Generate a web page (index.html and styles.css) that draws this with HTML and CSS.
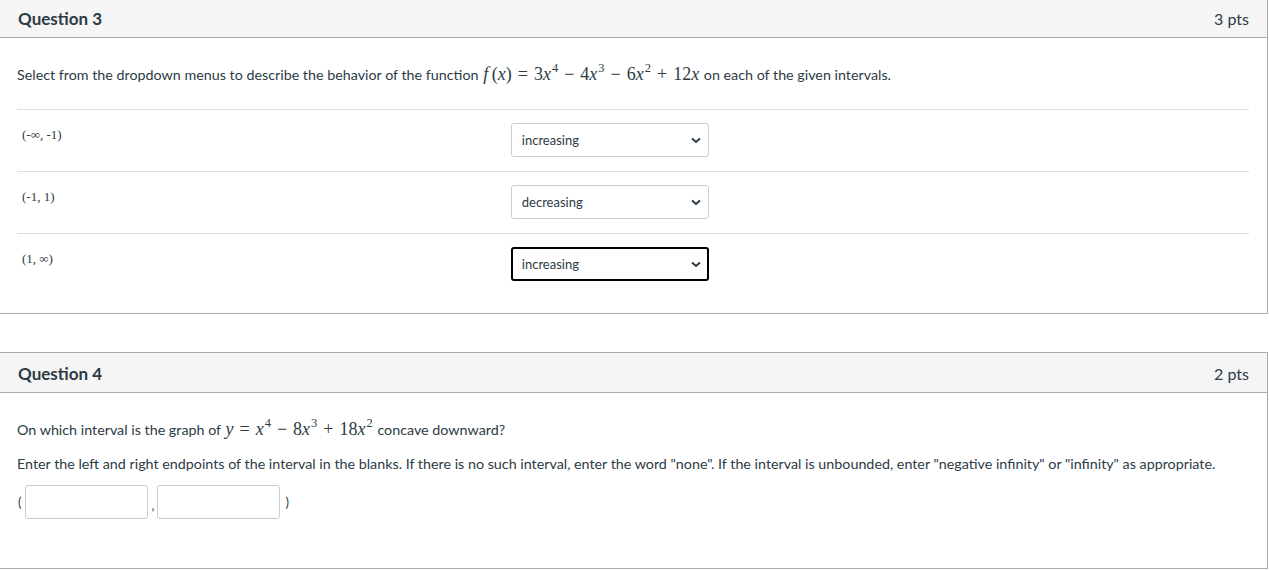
FILE: index.html
```html
<html>
  <head>
    <title>
      Quiz
    </title>
    <link rel="stylesheet" href="styles.css">
  </head>

  <body>
    <div class="quiz">

      <div class="question first">
        <div class="header">
          <span class="title">Question 3</span>
          <span class="points">3 pts</span>
        </div>
        <div class="content">
          <p class="text">Select from the dropdown menus to describe the behavior of the function
            <span class="math"><i>f</i>&#8201;(<i>x</i>)<span class="rel">=</span>3<i>x</i><sup>4</sup><span class="op">&minus;</span>4<i>x</i><sup>3</sup><span class="op">&minus;</span>6<i>x</i><sup>2</sup><span class="op">+</span>12<i>x</i></span>
            on each of the given intervals.</p>

          <table class="answers">
            <tr>
              <td class="interval">(-&infin;, -1)</td>
              <td>
                <span class="dropdown">
                  <select><option>increasing</option><option>decreasing</option></select>
                  <svg class="chevron" width="10" height="7" viewBox="0 0 10 7"><path d="M1 1.5 L5 5 L9 1.5" fill="none" stroke="#2d3b45" stroke-width="2"/></svg>
                </span>
              </td>
            </tr>
            <tr>
              <td class="interval">(-1, 1)</td>
              <td>
                <span class="dropdown">
                  <select><option>decreasing</option><option>increasing</option></select>
                  <svg class="chevron" width="10" height="7" viewBox="0 0 10 7"><path d="M1 1.5 L5 5 L9 1.5" fill="none" stroke="#2d3b45" stroke-width="2"/></svg>
                </span>
              </td>
            </tr>
            <tr>
              <td class="interval">(1, &infin;)</td>
              <td>
                <span class="dropdown">
                  <select class="focused"><option>increasing</option><option>decreasing</option></select>
                  <svg class="chevron" width="10" height="7" viewBox="0 0 10 7"><path d="M1 1.5 L5 5 L9 1.5" fill="none" stroke="#2d3b45" stroke-width="2"/></svg>
                </span>
              </td>
            </tr>
          </table>
        </div>
      </div>

      <div class="question">
        <div class="header">
          <span class="title">Question 4</span>
          <span class="points">2 pts</span>
        </div>
        <div class="content">
          <p class="text">On which interval is the graph of
            <span class="math"><i>y</i><span class="rel">=</span><i>x</i><sup>4</sup><span class="op">&minus;</span>8<i>x</i><sup>3</sup><span class="op">+</span>18<i>x</i><sup>2</sup></span>
            concave downward?</p>
          <p class="text second">Enter the left and right endpoints of the interval in the blanks. If there is no such interval, enter the word "none". If the interval is unbounded, enter "negative infinity" or "infinity" as appropriate.</p>
          <div class="blanks">
            <span class="paren">(</span><input type="text"><span class="comma">,</span><input type="text"><span class="paren">)</span>
          </div>
        </div>
      </div>

    </div>
  </body>
</html>
```

FILE: styles.css
```css
body {
  margin: 0;
  background-color: #fff;
  color: #2d3b45;
  font-family: Lato, "Open Sans", sans-serif;
  overflow: hidden;
}

.quiz {
  margin-top: -3px;
  margin-left: -1px;
  width: 1269px;
}

.question {
  border: 1px solid #aaa;
  margin-top: 38px;
}

.question.first {
  margin-top: 0;
}

.header {
  height: 40px;
  box-sizing: border-box;
  background-color: #f5f5f5;
  border-bottom: 1px solid #aaa;
  display: flex;
  align-items: center;
  justify-content: space-between;
  padding: 2px 18px 0 18px;
}

.title {
  font-size: 17px;
  font-weight: bold;
}

.points {
  font-size: 16px;
  color: #2d3b45;
}

.content {
  padding: 0 18px 18px 17px;
}

.text {
  font-size: 14.3px;
  line-height: 20px;
  margin: 27px 0 0 0;
}

.text.second {
  margin-top: 14px;
}

/* inline formulas */
.math {
  font-family: "Liberation Serif", "DejaVu Serif", serif;
  font-size: 18px;
  line-height: 1;
  white-space: nowrap;
  margin: 0 1px;
}

.math sup {
  font-size: 12.5px;
  line-height: 0;
  vertical-align: baseline;
  position: relative;
  top: -8px;
  margin-left: 1px;
}

.math .rel {
  margin: 0 6px;
}

.math .op {
  margin: 0 6px;
}

.answers {
  width: 100%;
  border-collapse: collapse;
  margin-top: 24px;
}

.answers td {
  border-top: 1px solid #ddd;
  padding: 13px 0 14px 0;
  vertical-align: top;
  height: 34px;
}

.answers td.interval {
  width: 40%;
  padding-left: 5px;
  padding-top: 17px;
  font-family: "Liberation Serif", "DejaVu Serif", serif;
  font-size: 13px;
}

.dropdown {
  position: relative;
  display: inline-block;
}

.dropdown select {
  appearance: none;
  -webkit-appearance: none;
  width: 198px;
  height: 34px;
  border: 1px solid #ccc;
  border-radius: 3px;
  background-color: #fff;
  color: #2d3b45;
  font-family: Lato, sans-serif;
  font-size: 13px;
  padding: 0 10px;
  margin: 0 0 0 1px;
}

.dropdown select.focused {
  border: 2px solid #000;
  padding-left: 9px;
}

.chevron {
  position: absolute;
  right: 8px;
  top: 14px;
}

.blanks {
  display: flex;
  align-items: center;
  font-size: 13px;
  padding-left: 1px;
  margin: 11px 0 31px 0;
}

.blanks input {
  width: 123px;
  height: 34px;
  box-sizing: border-box;
  border: 1px solid #ccc;
  border-radius: 3px;
  margin: 0;
}

.paren {
  padding: 0 4px 0 0;
}

.paren:last-child {
  padding: 0 0 0 5px;
}

.comma {
  width: 9px;
  text-align: center;
  padding-top: 6px;
}
```
